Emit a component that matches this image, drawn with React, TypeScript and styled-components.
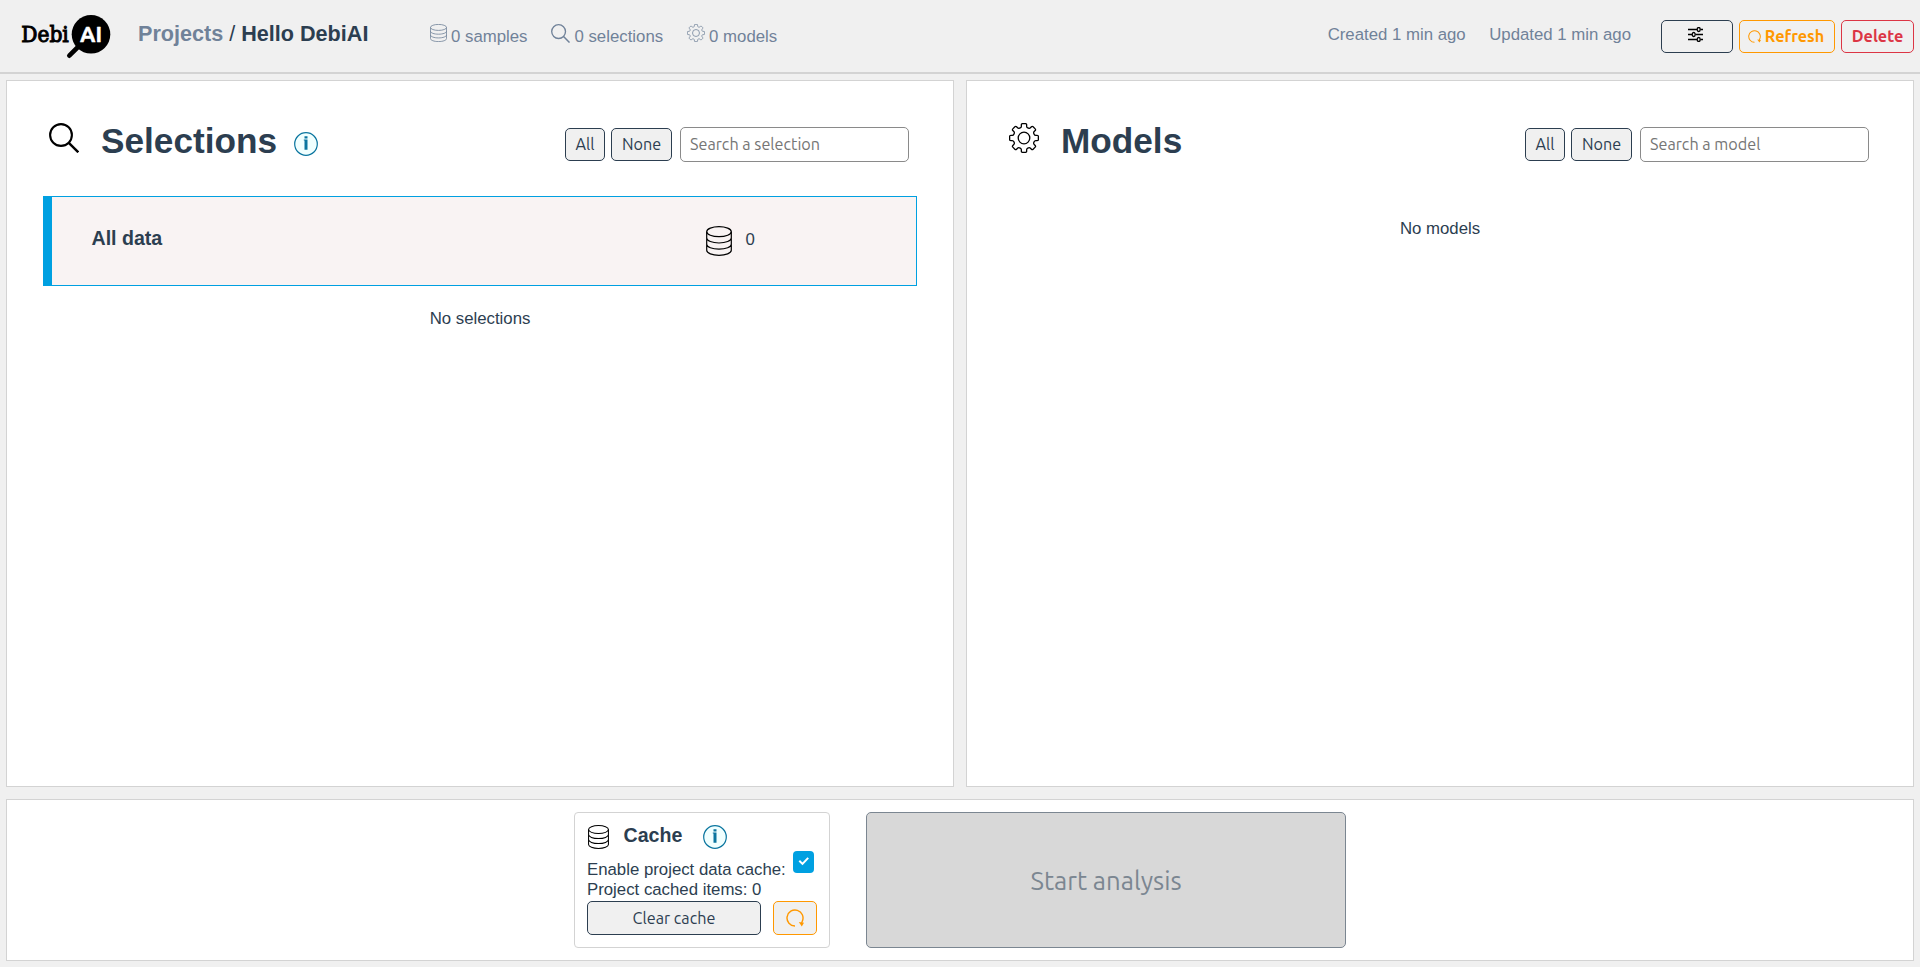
import React from 'react';
import styled, { createGlobalStyle } from 'styled-components';

const ink = '#2c3e50';
const muted = '#708299';
const blue = '#00a0e1';
const orange = '#ff9800';
const red = '#dc3545';
const sans = '"Liberation Sans", Arial, sans-serif';
const ui = 'Ubuntu, "Noto Sans", sans-serif';

const GlobalStyle = createGlobalStyle`
  * { box-sizing: border-box; }
  body { margin: 0; background: #f0f0f0; color: ${ink}; font: 16.8px/20px ${sans}; }
  h1, h2, h3, p { margin: 0; }
  svg { display: block; flex: none; }
`;

const Page = styled.div`
  display: flex;
  flex-direction: column;
  height: 967px;
  padding-bottom: 6px;
`;

const Header = styled.header`
  display: flex;
  align-items: flex-start;
  height: 74px;
  padding: 0 6px 0 20px;
  border-bottom: 2px solid #d3d3d3;
`;

const LogoLink = styled.div`
  width: 118px;
  padding-top: 13px;
`;

const Title = styled.h2`
  width: 292px;
  font-size: 21.6px;
  line-height: 67px;
  white-space: nowrap;
`;

const Crumb = styled.span<{ $muted?: boolean; $light?: boolean }>`
  color: ${(p) => (p.$muted ? muted : ink)};
  font-weight: ${(p) => (p.$light ? 400 : 700)};
`;

const Stats = styled.div`
  display: flex;
  flex: 1;
  gap: 24px;
`;

const Stat = styled.div`
  display: flex;
  gap: 4px;
  color: ${muted};
  line-height: 73px;
  white-space: nowrap;
  svg { margin-top: 24px; }
`;

const Dates = styled.div`
  display: flex;
  gap: 23.5px;
  margin-right: 30px;
  color: ${muted};
  line-height: 69px;
  white-space: nowrap;
`;

const Actions = styled.div`
  display: flex;
  gap: 6px;
  padding-top: 20px;
`;

const Button = styled.button<{ $color?: string; $width: number; $height?: number; $bold?: boolean }>`
  display: flex;
  align-items: center;
  justify-content: center;
  gap: 4px;
  width: ${(p) => p.$width}px;
  height: ${(p) => p.$height ?? 33}px;
  padding: 0;
  border: 1px solid ${(p) => p.$color ?? ink};
  border-radius: 5px;
  background: #f0f0f0;
  color: ${(p) => p.$color ?? ink};
  font: ${(p) => (p.$bold ? 700 : 400)} 16.2px/31px ${ui};
  white-space: nowrap;
`;

const SettingsButton = styled(Button)`
  padding: 0 3px 4px 0;
`;

const RefreshButton = styled(Button)`
  padding-right: 2px;
`;

const Columns = styled.main`
  display: flex;
  gap: 12px;
  height: 707px;
  margin: 6px 6px 12px;
`;

const Panel = styled.section`
  flex: 1;
  border: 1px solid #d3d3d3;
  background: #fff;
`;

const PanelHeader = styled.div`
  display: flex;
  align-items: flex-start;
  height: 115px;
  padding: 42px 44px 0 42px;
`;

const PanelTitle = styled.h1`
  margin: -7px 17px 0 22px;
  font-size: 35.2px;
  line-height: 49px;
`;

const InfoSlot = styled.div`
  padding-top: 9px;
`;

const Filters = styled.div`
  display: flex;
  align-items: center;
  gap: 6px;
  height: 35px;
  margin: 4px 0 0 auto;
`;

const Search = styled.input`
  width: 229px;
  height: 35px;
  margin-left: 2px;
  padding: 0 9px 1px;
  border: 1px solid #8a8a8a;
  border-radius: 5px;
  background: #fff;
  font: 16.2px ${ui};
  &::placeholder { color: #757575; opacity: 1; }
`;

const Card = styled.div`
  display: flex;
  height: 90px;
  margin: 0 36px;
  padding-left: 39.5px;
  border: 1px solid ${blue};
  border-left-width: 9px;
  background: #f9f3f3;
`;

const CardName = styled.h3`
  width: 614.5px;
  font-size: 19.6px;
  line-height: 83px;
`;

const CardCount = styled.div`
  display: flex;
  gap: 13.5px;
  line-height: 86px;
  svg { margin-top: 29px; }
`;

const Empty = styled.p`
  padding-top: 23px;
  text-align: center;
`;

const Footer = styled.footer`
  display: flex;
  justify-content: center;
  gap: 36px;
  height: 162px;
  margin: 0 6px;
  padding-top: 12px;
  border: 1px solid #d3d3d3;
  background: #fff;
`;

const CacheCard = styled.div`
  width: 256px;
  height: 136px;
  padding: 12px;
  border: 1px solid #d3d3d3;
  border-radius: 4px;
`;

const CacheTitle = styled.div`
  display: flex;
  height: 26px;
  padding-left: 1px;
  h3 {
    width: 79px;
    margin-left: 14.5px;
    font-size: 19.6px;
    line-height: 20px;
  }
`;

const CacheRow = styled.div`
  display: flex;
  gap: 7px;
  height: 20px;
  white-space: nowrap;
  span { padding-top: 9px; }
`;

const CacheItems = styled.div`
  padding-top: 9px;
  line-height: 20px;
`;

const CacheActions = styled.div`
  display: flex;
  gap: 12px;
  padding-top: 1px;
`;

const Start = styled.button`
  width: 480px;
  height: 136px;
  border: 1px solid #7b8691;
  border-radius: 5px;
  background: #d8d8d8;
  color: #7b8691;
  font: 25.7px ${ui};
`;

const Logo = () => (
  <svg width="92" height="46" viewBox="20 13 92 46">
    <text x="21.3" y="42.2" textLength="47.5" lengthAdjust="spacingAndGlyphs" fontFamily="'DejaVu Serif', serif" fontSize="21.5" fill="#000" stroke="#000" strokeWidth="1">Debi</text>
    <circle cx="91" cy="34.3" r="19.3" fill="#000" />
    <path d="M80 45 69.3 55.7" stroke="#000" strokeWidth="4.6" strokeLinecap="round" />
    <text x="80" y="42" textLength="22" lengthAdjust="spacingAndGlyphs" fontFamily="Ubuntu, 'Noto Sans', sans-serif" fontWeight="700" fontSize="22.5" fill="#fff" stroke="#fff" strokeWidth=".5" strokeLinejoin="round">AI</text>
  </svg>
);

type IconProps = { width: number; height: number; color?: string; stroke?: number };

const DataIcon = ({ width, height, color = '#000', stroke = 1.2 }: IconProps) => (
  <svg width={width} height={height} viewBox="0 0 26 30" preserveAspectRatio="none" fill="none" stroke={color} strokeWidth={stroke}>
    <ellipse cx="13" cy="5.7" rx="12.3" ry="5" />
    <path d="M.7 5.7v18.6c0 2.8 5.5 5 12.3 5s12.3-2.2 12.3-5V5.7M.7 12c0 2.8 5.5 5 12.3 5s12.3-2.2 12.3-5M.7 18.2c0 2.8 5.5 5 12.3 5s12.3-2.2 12.3-5" />
  </svg>
);

const SearchIcon = ({ width, height, color = '#000', stroke = 2.1 }: IconProps) => (
  <svg width={width} height={height} viewBox="0 0 30 30" fill="none" stroke={color} strokeWidth={stroke}>
    <circle cx="12" cy="12" r="10.9" />
    <path d="m19.8 19.8 9.5 9.5" strokeWidth={stroke * 1.15} />
  </svg>
);

// Outline of an eight-toothed wheel whose corners are rounded with quadratic curves.
const gearPath = (() => {
  const points: [number, number][] = [];
  for (let tooth = 0; tooth < 8; tooth += 1) {
    for (const [radius, offset] of [[10.9, -14], [14.6, -10.5], [14.6, 10.5], [10.9, 14]]) {
      const angle = ((tooth * 45 + offset) * Math.PI) / 180;
      points.push([15 + radius * Math.sin(angle), 15 - radius * Math.cos(angle)]);
    }
  }
  const toward = (a: [number, number], b: [number, number], distance: number) => {
    const t = distance / Math.hypot(b[0] - a[0], b[1] - a[1]);
    return `${(a[0] + (b[0] - a[0]) * t).toFixed(2)} ${(a[1] + (b[1] - a[1]) * t).toFixed(2)}`;
  };
  const steps = points.map((p, i) => {
    const before = points[(i + points.length - 1) % points.length];
    const after = points[(i + 1) % points.length];
    return `${i ? 'L' : 'M'}${toward(p, before, 1.2)}Q${p[0].toFixed(2)} ${p[1].toFixed(2)} ${toward(p, after, 1.2)}`;
  });
  return `${steps.join('')}Z`;
})();

const GearIcon = ({ width, height, color = '#000', stroke = 1.3 }: IconProps) => (
  <svg width={width} height={height} viewBox="0 0 30 30" fill="none" stroke={color} strokeWidth={stroke}>
    <circle cx="15" cy="15" r="5.8" />
    <path d={gearPath} />
  </svg>
);

const SettingsIcon = () => (
  <svg width="15" height="15" viewBox="0 0 15 15" fill="none" stroke="#000" strokeWidth="1.3">
    <path d="M0 2.5h9M12.5 2.5H15M0 7.5h4M7.5 7.5H15M0 12.5h9M12.5 12.5H15" />
    <ellipse cx="10.7" cy="2.5" rx="1.5" ry="2" />
    <ellipse cx="5.7" cy="7.5" rx="1.5" ry="2" />
    <ellipse cx="10.7" cy="12.5" rx="1.5" ry="2" />
  </svg>
);

const RefreshIcon = ({ width, height, stroke = 1.4 }: IconProps) => (
  <svg width={width} height={height} viewBox="0 0 18 18" fill="none" stroke={orange} strokeWidth={stroke}>
    <path d="M9 17A8 8 0 1 1 16.2 12.5L15.6 14" />
    <path d="m12.8 13 5.2.8-2.2 3.6z" fill={orange} stroke="none" />
  </svg>
);

const InfoIcon = () => (
  <svg width="24" height="24" viewBox="0 0 24 24">
    <circle cx="12" cy="12" r="11.3" fill="#f0ffff" stroke="#0a759f" strokeWidth="1.2" />
    <path d="M10.5 4.200h3v2.300h-3zM9.800 7.500h3.700v10.300h-3V8.500h-.7z" fill="#0a759f" />
  </svg>
);

const CheckBox = () => (
  <svg width="21" height="22" viewBox="0 0 21 22">
    <rect width="21" height="22" rx="4" fill={blue} />
    <path d="m6.3 9.7 3.2 3.2 5.7-6" fill="none" stroke="#fff" strokeWidth="2" />
  </svg>
);

const ListFilters = ({ placeholder }: { placeholder: string }) => (
  <Filters>
    <Button $width={40}>All</Button>
    <Button $width={61}>None</Button>
    <Search placeholder={placeholder} />
  </Filters>
);

export default function App() {
  return (
    <Page>
      <GlobalStyle />
      <Header>
        <LogoLink><Logo /></LogoLink>
        <Title>
          <Crumb $muted>Projects</Crumb> <Crumb $light>/</Crumb> <Crumb>Hello DebiAI</Crumb>
        </Title>
        <Stats>
          <Stat><DataIcon width={17} height={18} color={muted} stroke={1.3} />0 samples</Stat>
          <Stat><SearchIcon width={19} height={19} color={muted} />0 selections</Stat>
          <Stat><GearIcon width={18} height={18} color={muted} />0 models</Stat>
        </Stats>
        <Dates>
          <span>Created 1 min ago</span>
          <span>Updated 1 min ago</span>
        </Dates>
        <Actions>
          <SettingsButton $width={72}><SettingsIcon /></SettingsButton>
          <RefreshButton $width={96} $color={orange} $bold><RefreshIcon width={13} height={13} />Refresh</RefreshButton>
          <Button $width={73} $color={red} $bold>Delete</Button>
        </Actions>
      </Header>
      <Columns>
        <Panel>
          <PanelHeader>
            <SearchIcon width={30} height={30} />
            <PanelTitle>Selections</PanelTitle>
            <InfoSlot><InfoIcon /></InfoSlot>
            <ListFilters placeholder="Search a selection" />
          </PanelHeader>
          <Card>
            <CardName>All data</CardName>
            <CardCount><DataIcon width={26} height={30} />0</CardCount>
          </Card>
          <Empty>No selections</Empty>
        </Panel>
        <Panel>
          <PanelHeader>
            <GearIcon width={30} height={30} />
            <PanelTitle>Models</PanelTitle>
            <ListFilters placeholder="Search a model" />
          </PanelHeader>
          <Empty>No models</Empty>
        </Panel>
      </Columns>
      <Footer>
        <CacheCard>
          <CacheTitle>
            <DataIcon width={21} height={24} stroke={1.3} />
            <h3>Cache</h3>
            <InfoIcon />
          </CacheTitle>
          <CacheRow>
            <span>Enable project data cache:</span>
            <CheckBox />
          </CacheRow>
          <CacheItems>Project cached items: 0</CacheItems>
          <CacheActions>
            <Button $width={174} $height={34}>Clear cache</Button>
            <Button $width={44} $height={34} $color={orange}><RefreshIcon width={18} height={18} /></Button>
          </CacheActions>
        </CacheCard>
        <Start>Start analysis</Start>
      </Footer>
    </Page>
  );
}
